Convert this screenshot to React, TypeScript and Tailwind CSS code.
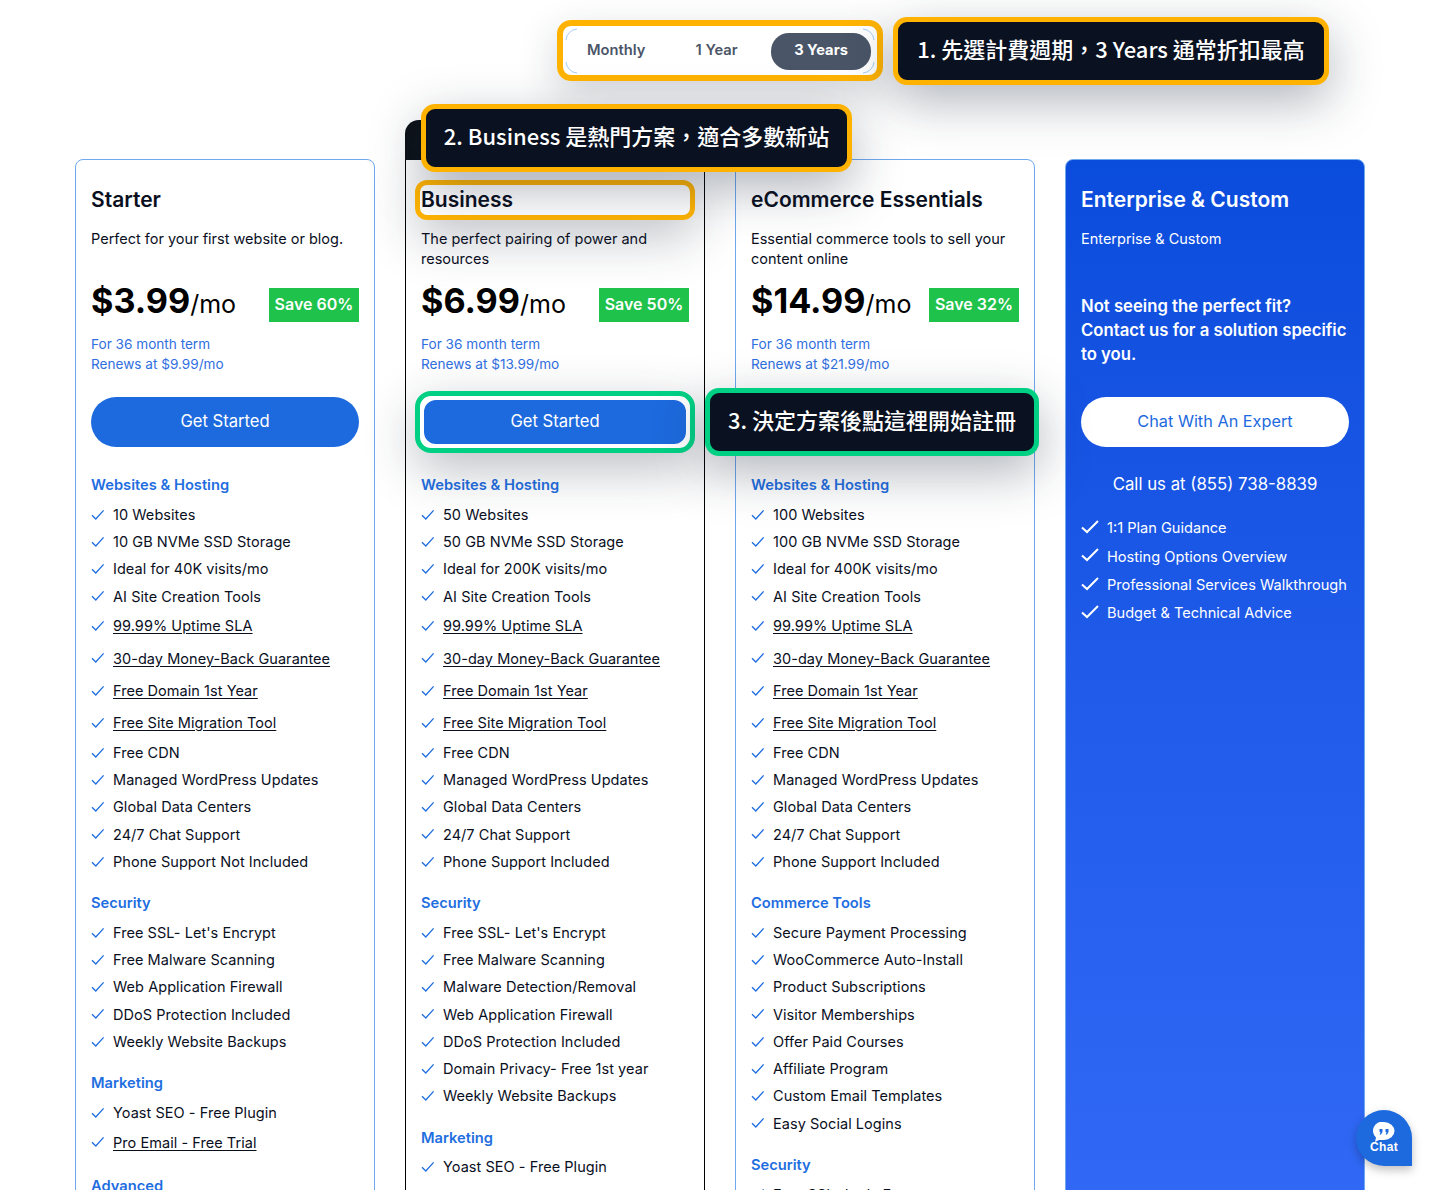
import type { ReactNode } from 'react'

type Section = { title: string; items: string[] }
type Plan = {
  name: string
  desc: string
  price: string
  save: string
  renew: string
  sections: Section[]
  popular?: boolean
}

// "_" prefix = underlined row (these rows are taller on the real page)
const hosting = (sites: string, storage: string, visits: string, phone: string) => [
  sites,
  storage,
  visits,
  'AI Site Creation Tools',
  '_99.99% Uptime SLA',
  '_30-day Money-Back Guarantee',
  '_Free Domain 1st Year',
  '_Free Site Migration Tool',
  'Free CDN',
  'Managed WordPress Updates',
  'Global Data Centers',
  '24/7 Chat Support',
  phone,
]

const plans: Plan[] = [
  {
    name: 'Starter',
    desc: 'Perfect for your first website or blog.',
    price: '$3.99',
    save: 'Save 60%',
    renew: 'Renews at $9.99/mo',
    sections: [
      { title: 'Websites & Hosting', items: hosting('10 Websites', '10 GB NVMe SSD Storage', 'Ideal for 40K visits/mo', 'Phone Support Not Included') },
      { title: 'Security', items: ["Free SSL- Let's Encrypt", 'Free Malware Scanning', 'Web Application Firewall', 'DDoS Protection Included', 'Weekly Website Backups'] },
      { title: 'Marketing', items: ['Yoast SEO - Free Plugin', '_Pro Email - Free Trial'] },
      { title: 'Advanced', items: [] },
    ],
  },
  {
    name: 'Business',
    desc: 'The perfect pairing of power and resources',
    price: '$6.99',
    save: 'Save 50%',
    renew: 'Renews at $13.99/mo',
    popular: true,
    sections: [
      { title: 'Websites & Hosting', items: hosting('50 Websites', '50 GB NVMe SSD Storage', 'Ideal for 200K visits/mo', 'Phone Support Included') },
      { title: 'Security', items: ["Free SSL- Let's Encrypt", 'Free Malware Scanning', 'Malware Detection/Removal', 'Web Application Firewall', 'DDoS Protection Included', 'Domain Privacy- Free 1st year', 'Weekly Website Backups'] },
      { title: 'Marketing', items: ['Yoast SEO - Free Plugin'] },
    ],
  },
  {
    name: 'eCommerce Essentials',
    desc: 'Essential commerce tools to sell your content online',
    price: '$14.99',
    save: 'Save 32%',
    renew: 'Renews at $21.99/mo',
    sections: [
      { title: 'Websites & Hosting', items: hosting('100 Websites', '100 GB NVMe SSD Storage', 'Ideal for 400K visits/mo', 'Phone Support Included') },
      { title: 'Commerce Tools', items: ['Secure Payment Processing', 'WooCommerce Auto-Install', 'Product Subscriptions', 'Visitor Memberships', 'Offer Paid Courses', 'Affiliate Program', 'Custom Email Templates', 'Easy Social Logins'] },
      { title: 'Security', items: ["Free SSL- Let's Encrypt"] },
    ],
  },
]

const enterpriseList = ['1:1 Plan Guidance', 'Hosting Options Overview', 'Professional Services Walkthrough', 'Budget & Technical Advice']

function Tick() {
  return (
    <svg width="14" height="12" viewBox="0 0 14 12" fill="none" className="shrink-0 text-[#1f6ee0]">
      <path d="M1 6.2 4.8 10 12.6 1.4" stroke="currentColor" strokeWidth="1.3" />
    </svg>
  )
}

function Feature({ text }: { text: string }) {
  const link = text.startsWith('_')
  return (
    <li className={`flex items-center gap-2 ${link ? 'h-[32.25px]' : 'h-[27.25px]'}`}>
      <Tick />
      <span className={link ? 'underline underline-offset-2' : ''}>{link ? text.slice(1) : text}</span>
    </li>
  )
}

function PlanCard({ plan }: { plan: Plan }) {
  return (
    <div className={`rounded-[8px] border bg-white px-[15px] pt-[25px] ${plan.popular ? 'relative rounded-t-none border-black' : 'border-[#6fa8ef]'}`}>
      {plan.popular && (
        <div className="absolute -left-px -right-px -top-[40px] h-[40px] rounded-t-[14px] bg-[#0c1118]" />
      )}
      <div className="relative">
        <h3 className="-mb-px pt-px text-[21px] leading-[28px] font-semibold text-[#0a0f1e]">{plan.name}</h3>
        {plan.popular && (
          <div className="absolute -inset-x-[6px] -top-[5px] -bottom-[6px] rounded-[12px] border-[5px] border-[#ffb300] shadow-[0_16px_50px_rgba(30,40,60,0.3)]" />
        )}
      </div>
      <p className="mt-4 min-h-[40px] text-[14.5px] leading-[20px] text-[#0a0f1e]">{plan.desc}</p>
      <div className="mt-4 flex h-[40px] items-center justify-between">
        <div className="pb-2 text-black">
          <span className="text-[34.2px] font-bold">{plan.price}</span>
          <span className="text-[25px]">/mo</span>
        </div>
        <span className="flex h-[34px] w-[90px] items-center justify-center bg-[#1fc24b] pb-[2px] text-[16px] font-semibold text-white">{plan.save}</span>
      </div>
      <div className="mt-[9px] text-[13.6px] leading-[20px] text-[#2f6fe0]">
        <p>For 36 month term</p>
        <p>{plan.renew}</p>
      </div>
      <div className="relative mt-[23px]">
        {plan.popular ? (
          <div className="h-[50px] p-[3px]">
            <div className="absolute -inset-[6px] rounded-[16px] border-[5px] border-[#00d084] bg-white shadow-[0_16px_50px_rgba(30,40,60,0.3)]" />
            <button className="relative block h-[44px] w-full rounded-[12px] bg-[#1d6ade] pb-[2px] text-[16.6px] text-white">Get Started</button>
          </div>
        ) : (
          <button className="block h-[50px] w-full rounded-full bg-[#1d6ade] pb-[2px] text-[16.6px] text-white">Get Started</button>
        )}
      </div>
      <div className="mt-[28px]">
        {plan.sections.map((s, i) => (
          <div key={s.title} className={i > 0 ? 'mt-[17.8px]' : ''}>
            <h4 className="mb-[6px] text-[14.7px] leading-[20px] font-semibold text-[#1f6ee0]">{s.title}</h4>
            <ul className="text-[14.5px] tracking-[0.05px] text-[#0a0f1e]">
              {s.items.map((t) => <Feature key={t} text={t} />)}
            </ul>
          </div>
        ))}
      </div>
    </div>
  )
}

function EnterpriseCard() {
  return (
    <div className="rounded-[8px] border border-[#6fa8ef] bg-gradient-to-b from-[#0a4cdc] to-[#3169f6] px-[15px] pt-[25px] text-white">
      <h3 className="-mb-px pt-px text-[21px] leading-[28px] font-semibold">Enterprise &amp; Custom</h3>
      <p className="mt-4 min-h-[40px] text-[14.5px] leading-[20px]">Enterprise &amp; Custom</p>
      <p className="mt-[25px] text-[16.7px] leading-[24px] font-semibold">
        Not seeing the perfect fit?<br />Contact us for a solution specific to you.
      </p>
      <button className="mt-[31px] block h-[50px] w-full rounded-full bg-white pb-[2px] text-[16.3px] text-[#1d6ade]">Chat With An Expert</button>
      <p className="mt-[25px] text-center text-[16.8px] leading-[24px]">Call us at (855) 738-8839</p>
      <ul className="mt-[19px] text-[14.6px]">
        {enterpriseList.map((t) => (
          <li key={t} className="flex h-[28.3px] items-center gap-2">
            <svg width="18" height="14" viewBox="0 0 18 14" fill="none" className="-mt-1 shrink-0">
              <path d="M1 7.5 6 12 17 1" stroke="white" strokeWidth="2" />
            </svg>
            <span>{t}</span>
          </li>
        ))}
      </ul>
    </div>
  )
}

function Callout({ className, children }: { className: string; children: ReactNode }) {
  return (
    <div className={`absolute z-20 flex h-[68px] items-center justify-center rounded-[14px] border-[5px] bg-[#0a1120] pb-[6px] text-[22px] font-medium whitespace-nowrap text-white shadow-[0_16px_50px_rgba(30,40,60,0.35)] font-['Noto_Sans_CJK_TC','Noto_Sans',sans-serif] ${className}`}>
      {children}
    </div>
  )
}

function TermToggle() {
  return (
    <div className="relative flex h-[50px] w-[326px] items-center justify-between pl-[14px] pr-[12px] text-[14.7px] font-semibold text-[#4a5568]">
      <svg width="310" height="46" viewBox="0 0 310 46" fill="none" className="absolute left-[8px] top-[2px] text-[#a9cdf3]">
        <path d="M12 1A12 12 0 0 0 1 12M1 34A12 12 0 0 0 12 45M298 1A12 12 0 0 1 309 12M309 34A12 12 0 0 1 298 45" stroke="currentColor" />
      </svg>
      <span className="relative w-[100px] pb-[2px] pl-[16px]">Monthly</span>
      <span className="relative w-[100px] pb-[2px] pr-[9px] text-center">1 Year</span>
      <span className="relative flex h-[37px] w-[100px] items-center justify-center rounded-[18px] bg-[#4a5568] pb-[2px] font-bold text-white">3 Years</span>
      <div className="absolute inset-x-0 -top-[6px] -bottom-[5px] rounded-[14px] border-[6px] border-[#ffb300] shadow-[0_14px_40px_rgba(30,40,60,0.2)]" />
    </div>
  )
}

function ChatBubble() {
  return (
    <div className="absolute left-[1356px] top-[1110px] z-30 flex h-[56px] w-[56px] flex-col items-center justify-center rounded-[28px] rounded-br-none bg-[#1d6ade] shadow-[0_4px_10px_rgba(0,0,0,0.25)]">
      <svg width="22" height="20" viewBox="0 0 22 20">
        <path d="M11 0a10.5 9 0 0 1 0 18H6l-4 2 1-4.5A9 9 0 0 1 11 0Z" fill="white" />
        <path d="M6.5 7h3v3l-1.5 2.5H6.6L7.5 10h-1ZM12.5 7h3v3L14 12.5h-1.4l.9-2.5h-1Z" fill="#1d6ade" />
      </svg>
      <span className="mt-[-2px] text-[12px] leading-[14px] font-bold tracking-wide text-white font-['Liberation_Sans',sans-serif]">Chat</span>
    </div>
  )
}

export default function App() {
  return (
    <div className="relative h-[1190px] overflow-hidden bg-white font-['Inter','Noto_Sans_CJK_TC',sans-serif]">
      <div className="flex h-[159px] justify-center pt-[26px]">
        <TermToggle />
      </div>

      <div className="grid grid-cols-4 gap-[30px] px-[75px]">
        {plans.map((p) => <PlanCard key={p.name} plan={p} />)}
        <EnterpriseCard />
      </div>

      <Callout className="left-[893px] top-[17px] w-[436px] border-[#ffb300]">1. 先選計費週期，3 Years 通常折扣最高</Callout>
      <Callout className="left-[421px] top-[104px] w-[431px] border-[#ffb300]">2. Business 是熱門方案，適合多數新站</Callout>
      <Callout className="left-[705px] top-[388px] w-[334px] border-[#00d084]">3. 決定方案後點這裡開始註冊</Callout>

      <ChatBubble />
    </div>
  )
}
